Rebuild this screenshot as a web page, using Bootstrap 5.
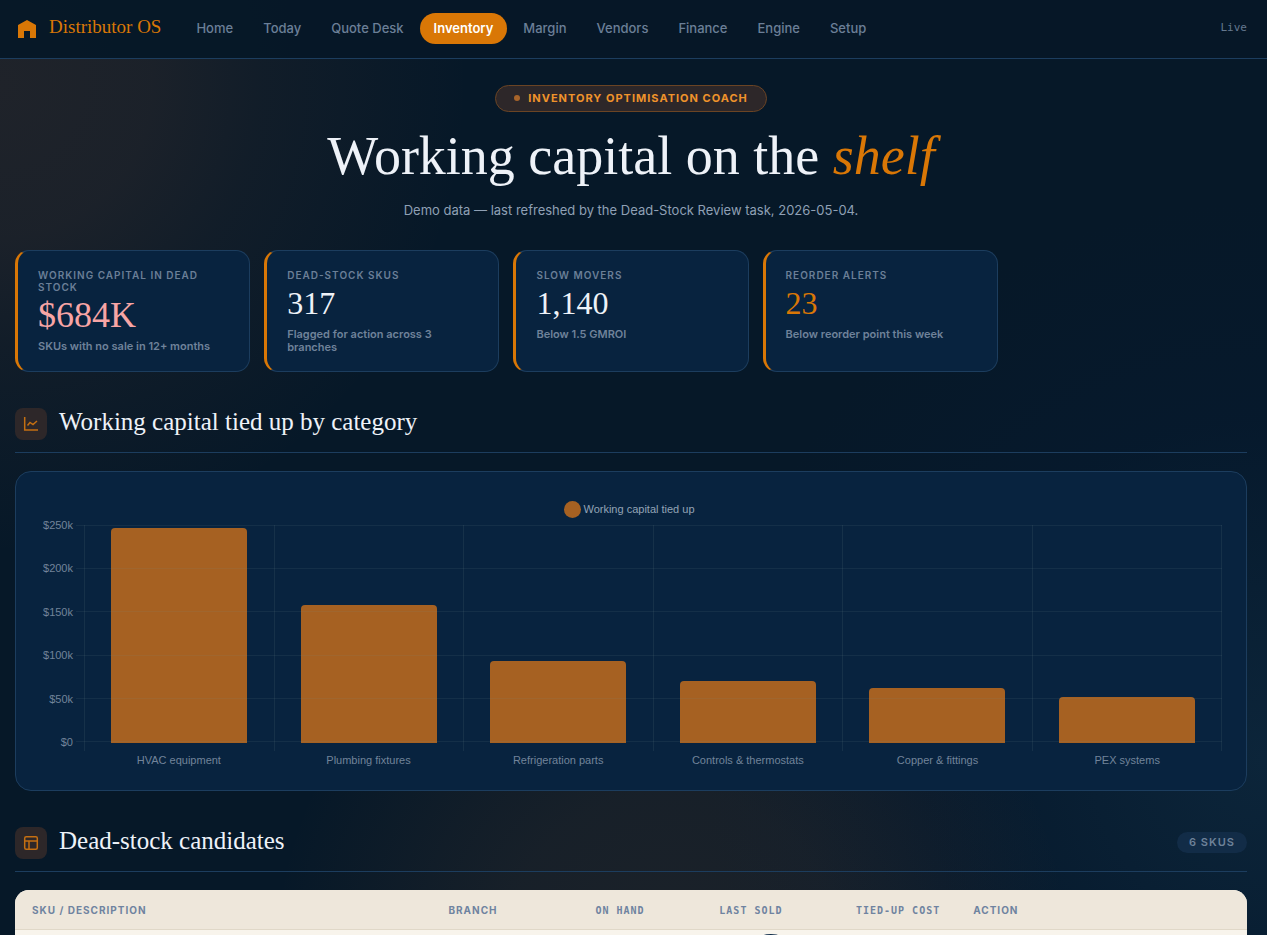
<!DOCTYPE html>
<html lang="en">
<head>
<meta charset="utf-8">
<meta name="viewport" content="width=device-width, initial-scale=1">
<title>Distributor OS – Inventory</title>
<link href="https://cdn.jsdelivr.net/npm/bootstrap@5.3.0/dist/css/bootstrap.min.css" rel="stylesheet">
<style>
:root{--amber:#d97706;--line:#1c3d5e;--panel:#08233f;--muted:#6b7f97;--ink:#eef2f8}
html{scrollbar-width:none}
body{font-family:Inter,"Liberation Sans",sans-serif;color:var(--ink);min-height:100vh;
  background:
    radial-gradient(circle at 0 85px,rgba(200,108,55,.13),rgba(200,108,55,.11) 150px,rgba(200,108,55,.06) 260px,rgba(200,108,55,0) 470px),
    radial-gradient(circle at 53% 960px,rgba(200,112,50,.11),rgba(200,112,50,.09) 170px,rgba(200,112,50,0) 400px),
    radial-gradient(circle at 100% 760px,rgba(18,50,76,.5),rgba(6,28,54,.3) 340px,rgba(6,28,54,0) 560px),
    #061828}
.serif{font-family:"Liberation Serif",serif;font-weight:400}
.mono{font-family:"DejaVu Sans Mono",monospace}
.topbar{background:rgba(6,24,39,.97);border-bottom:1px solid var(--line);padding:13px 20px 14px 18px}
.topbar-brand{gap:13px}
.brand-name{font-size:19px;line-height:24px;color:var(--amber);margin-bottom:4px}
.topbar .nav{gap:2px;margin-left:21px}
.topbar .nav-link{font-size:13px;line-height:15px;font-weight:500;padding:8px 14px;border-radius:16px;color:var(--muted)}
.topbar .nav-link.active{background:var(--amber);color:#fff;font-weight:600}
.live{font-size:11px;color:#64788f}
main{padding:24px 20px 0 15px}
.pill{font-size:11px;line-height:15px;font-weight:700;letter-spacing:1px;color:#f0932b;background:#2d2729;border:1px solid #6b4424;padding:5px 18px}
.dot{width:6px;height:6px;background:#a8642a}
h1{font-size:54px;line-height:64px;margin:12px 0 14px}
h1 em{color:var(--amber)}
.lede{font-size:13px;line-height:16px;color:#8fa0b5}
.kpis{display:grid;grid-template-columns:repeat(5,1fr);gap:14px;margin-top:32px}
.kpi{background:var(--panel);border:1px solid var(--line);border-left:3px solid var(--amber);border-radius:14px;padding:18px 20px 17px}
.kpi h2{font-size:10px;line-height:12px;font-weight:600;letter-spacing:1px;color:var(--muted);margin:0}
.figure-value{font-size:32px;line-height:40px;margin:2px 0 5px}
.figure-value.big{font-size:36px;line-height:40px;color:#f8a5a5}
.figure-value.warn{color:var(--amber)}
.kpi p{font-size:11px;line-height:13px;font-weight:600;color:#6f829a;margin:0}
.section-head{margin-top:36px;padding-bottom:12px;border-bottom:1px solid var(--line);gap:12px}
.section-head h2{font-size:25px;line-height:28px;margin:0 0 4px}
.tile{width:32px;height:32px;border-radius:8px;background:#2d2729}
.count{font-size:11px;line-height:13px;font-weight:600;letter-spacing:1px;color:#6e8299;background:#122c47;padding:4px 12px}
.panel{background:var(--panel);border:1px solid var(--line);border-radius:16px;padding:24px 24px 23px;margin-top:18px}
.chart{font-family:"Liberation Sans",sans-serif;font-size:11px;line-height:14px;color:#72849a;display:grid;grid-template-columns:44px 1fr}
.legend-row{grid-column:1/3;color:#93a3b6;height:29px;gap:2px;padding:0 3px 2px 0}
.swatch{width:17px;height:17px;background:#a66122}
.y-axis{height:232px;margin:-7px 11px -7px 0}
.plot{display:grid;grid-template-rows:218px;height:218px}
.plot>*{grid-area:1/1}
.lines{margin-left:-8px;z-index:1}
.lines i{height:1px;background:rgba(120,150,150,.11)}
.slot{flex:1;height:226px;border-left:1px solid rgba(120,150,150,.13);padding-bottom:8px}
.slot:last-child{border-right:1px solid rgba(120,150,150,.13)}
.bar{width:72%;background:#a66122;border-radius:4px 4px 0 0}
.x-axis{grid-column:2;margin-top:10px}
.x-axis span{flex:1;text-align:center}
.sheet{background:#f8f4ec;border-radius:14px 14px 0 0;margin-top:18px;overflow:hidden}
.sheet table{width:100%;table-layout:fixed}
.sheet th{background:#eee7db;border-bottom:1px solid #e0d8c8;font-size:10px;line-height:13px;letter-spacing:1px;font-weight:700;color:#6f83a0;padding:14px 16px 12px 17px}
.sheet th.mono{text-align:right;padding-left:0}
.sheet td{padding:4px 0}
.sheet .disc{width:56px;height:56px;background:#132f4c}
</style>
</head>
<body>
<nav class="topbar d-flex align-items-center">
  <a class="topbar-brand d-flex align-items-center text-decoration-none" href="#">
    <svg width="18" height="18" viewBox="0 0 18 18" aria-hidden="true"><path fill="#d97706" d="M0 5 9 0l9 5v13h-6v-7H6v7H0z"/></svg>
    <span class="serif brand-name">Distributor OS</span>
  </a>
  <div class="nav flex-nowrap text-nowrap">
    <a class="nav-link" href="#">Home</a><a class="nav-link" href="#">Today</a><a class="nav-link" href="#">Quote Desk</a><a class="nav-link active" href="#" aria-current="page">Inventory</a><a class="nav-link" href="#">Margin</a><a class="nav-link" href="#">Vendors</a><a class="nav-link" href="#">Finance</a><a class="nav-link" href="#">Engine</a><a class="nav-link" href="#">Setup</a>
  </div>
  <span class="live mono ms-auto">Live</span>
</nav>
<main>
  <header class="text-center">
    <div class="pill rounded-pill d-inline-flex align-items-center gap-2"><span class="dot rounded-circle"></span>INVENTORY OPTIMISATION COACH</div>
    <h1 class="serif">Working capital on the <em>shelf</em></h1>
    <p class="lede mb-0">Demo data — last refreshed by the Dead-Stock Review task, 2026-05-04.</p>
  </header>

  <section class="kpis">
    <article class="kpi"><h2>WORKING CAPITAL IN DEAD STOCK</h2><div class="serif figure-value big">$684K</div><p>SKUs with no sale in 12+ months</p></article>
    <article class="kpi"><h2>DEAD-STOCK SKUS</h2><div class="serif figure-value">317</div><p>Flagged for action across 3 branches</p></article>
    <article class="kpi"><h2>SLOW MOVERS</h2><div class="serif figure-value">1,140</div><p>Below 1.5 GMROI</p></article>
    <article class="kpi"><h2>REORDER ALERTS</h2><div class="serif figure-value warn">23</div><p>Below reorder point this week</p></article>
  </section>

  <div class="section-head d-flex align-items-center">
    <span class="tile d-flex align-items-center justify-content-center"><svg width="16" height="16" viewBox="0 0 16 16" fill="none" stroke="#c46f12" stroke-width="1.5" aria-hidden="true"><path d="M1.700 1v13H15"/><path d="m4.500 9.500 2.500-3 3 2L14 5"/></svg></span>
    <h2 class="serif">Working capital tied up by category</h2>
  </div>
  <section class="panel">
    <div class="chart">
      <div class="legend-row d-flex align-items-center justify-content-center"><span class="swatch rounded-circle"></span>Working capital tied up</div>
      <div class="y-axis d-flex flex-column justify-content-between text-end"><span>$250k</span><span>$200k</span><span>$150k</span><span>$100k</span><span>$50k</span><span>$0</span></div>
      <div class="plot">
        <div class="d-flex">
          <div class="slot d-flex align-items-end justify-content-center"><div class="bar" style="height:98.4%"></div></div>
          <div class="slot d-flex align-items-end justify-content-center"><div class="bar" style="height:63.2%"></div></div>
          <div class="slot d-flex align-items-end justify-content-center"><div class="bar" style="height:37.6%"></div></div>
          <div class="slot d-flex align-items-end justify-content-center"><div class="bar" style="height:28.4%"></div></div>
          <div class="slot d-flex align-items-end justify-content-center"><div class="bar" style="height:25.2%"></div></div>
          <div class="slot d-flex align-items-end justify-content-center"><div class="bar" style="height:20.8%"></div></div>
        </div>
        <div class="lines d-flex flex-column justify-content-between"><i></i><i></i><i></i><i></i><i></i><i></i></div>
      </div>
      <div class="x-axis d-flex"><span>HVAC equipment</span><span>Plumbing fixtures</span><span>Refrigeration parts</span><span>Controls &amp; thermostats</span><span>Copper &amp; fittings</span><span>PEX systems</span></div>
    </div>
  </section>

  <div class="section-head d-flex align-items-center">
    <span class="tile d-flex align-items-center justify-content-center"><svg width="16" height="16" viewBox="0 0 16 16" fill="none" stroke="#c46f12" stroke-width="1.5" aria-hidden="true"><rect x="1.700" y="1.700" width="12.600" height="12.600" rx="1.500"/><path d="M1.700 6h12.600M6 6v8.300"/></svg></span>
    <h2 class="serif">Dead-stock candidates</h2>
    <span class="count rounded-pill ms-auto">6 SKUS</span>
  </div>
  <div class="sheet">
    <table>
      <colgroup><col style="width:33.8%"><col style="width:8.8%"><col style="width:9.8%"><col style="width:11.2%"><col style="width:12.8%"><col></colgroup>
      <thead><tr><th>SKU / DESCRIPTION</th><th>BRANCH</th><th class="mono">ON HAND</th><th class="mono">LAST SOLD</th><th class="mono">TIED-UP COST</th><th>ACTION</th></tr></thead>
      <tbody><tr><td></td><td></td><td></td><td><div class="disc rounded-circle ms-auto"></div></td><td></td><td></td></tr></tbody>
    </table>
  </div>
</main>
<script src="https://cdn.jsdelivr.net/npm/bootstrap@5.3.0/dist/js/bootstrap.bundle.min.js"></script>
</body>
</html>
